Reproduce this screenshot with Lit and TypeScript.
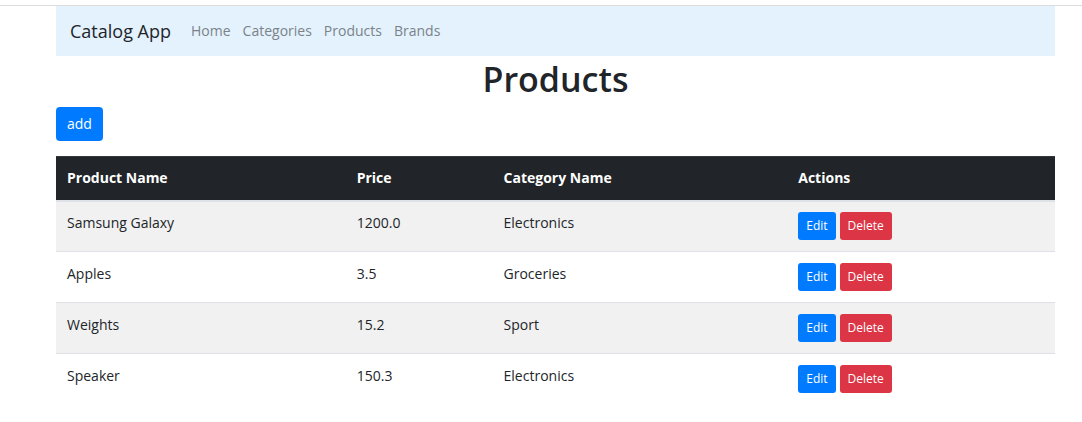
import { LitElement, html, css } from "lit";
import { customElement, state } from "lit/decorators.js";

interface Product {
  name: string;
  price: string;
  category: string;
}

@customElement("app-root")
export class AppRoot extends LitElement {
  static styles = css`
    :host {
      display: block;
      padding-top: 5px;
      background: #fff;
      color: #212529;
      font-family: "Segoe UI", "Open Sans", "Noto Sans", sans-serif;
      font-size: 14px;
      line-height: 22px;
    }
    *,
    *::before,
    *::after {
      box-sizing: border-box;
    }
    .page {
      border-top: 1px solid #dcdcdc;
      padding: 0 27px 0 56px;
    }
    .navbar {
      display: flex;
      align-items: center;
      gap: 14px;
      padding: 7px 14px;
      background: #e3f2fd;
    }
    .brand {
      color: #212529;
      font-size: 18px;
      line-height: 36px;
      text-decoration: none;
    }
    .links {
      display: flex;
      margin: 0;
      padding: 0;
      list-style: none;
    }
    .link {
      display: block;
      padding: 7px 6px;
      color: #7b8289;
      text-decoration: none;
    }
    .title {
      margin: 0 0 6px;
      padding-top: 2px;
      font-size: 34px;
      font-weight: 600;
      line-height: 43px;
      text-align: center;
    }
    .btn {
      display: inline-block;
      border: 1px solid transparent;
      border-radius: 4px;
      padding: 5px 10px;
      color: #fff;
      font: inherit;
      text-align: center;
      cursor: pointer;
    }
    .small {
      border-radius: 3px;
      padding: 3px 7px;
      font-size: 12px;
      line-height: 20px;
    }
    .primary {
      background: #007bff;
    }
    .danger {
      background: #dc3545;
    }
    .toolbar {
      display: flex;
      margin-bottom: 15px;
    }
    .actions {
      display: flex;
      gap: 4px;
    }
    .table {
      width: 100%;
      table-layout: fixed;
      border-collapse: separate;
      border-spacing: 0;
    }
    .name {
      width: 29%;
    }
    .price {
      width: 14.7%;
    }
    .category {
      width: 29.5%;
    }
    th {
      border-top: 1px solid #32383e;
      border-bottom: 2px solid #dee2e6;
      padding: 10px 11px 11px;
      background: #212529;
      color: #fff;
      font-weight: 700;
      text-align: left;
    }
    td {
      border-top: 1px solid #dee2e6;
      padding: 11px;
      vertical-align: top;
    }
    tbody tr:first-child td {
      border-top: 0;
      padding-top: 10px;
    }
    tbody tr:nth-child(odd) td {
      background: #f1f1f1;
    }
  `;

  @state()
  private products: Product[] = [
    { name: "Samsung Galaxy", price: "1200.0", category: "Electronics" },
    { name: "Apples", price: "3.5", category: "Groceries" },
    { name: "Weights", price: "15.2", category: "Sport" },
    { name: "Speaker", price: "150.3", category: "Electronics" },
  ];

  render() {
    return html`
      <div class="page">
        <nav class="navbar">
          <a class="brand" href="#">Catalog App</a>
          <ul class="links">
            ${["Home", "Categories", "Products", "Brands"].map(
              (label) => html`<li><a class="link" href="#">${label}</a></li>`
            )}
          </ul>
        </nav>
        <main>
          <h1 class="title">Products</h1>
          <div class="toolbar">
            <button class="btn primary" type="button">add</button>
          </div>
          <table class="table">
            <thead>
              <tr>
                <th class="name" scope="col">Product Name</th>
                <th class="price" scope="col">Price</th>
                <th class="category" scope="col">Category Name</th>
                <th scope="col">Actions</th>
              </tr>
            </thead>
            <tbody>
              ${this.products.map(
                (p) => html`<tr>
                  <td>${p.name}</td>
                  <td>${p.price}</td>
                  <td>${p.category}</td>
                  <td>
                    <div class="actions">
                      <button class="btn small primary" type="button">Edit</button>
                      <button class="btn small danger" type="button">Delete</button>
                    </div>
                  </td>
                </tr>`
              )}
            </tbody>
          </table>
        </main>
      </div>
    `;
  }
}
